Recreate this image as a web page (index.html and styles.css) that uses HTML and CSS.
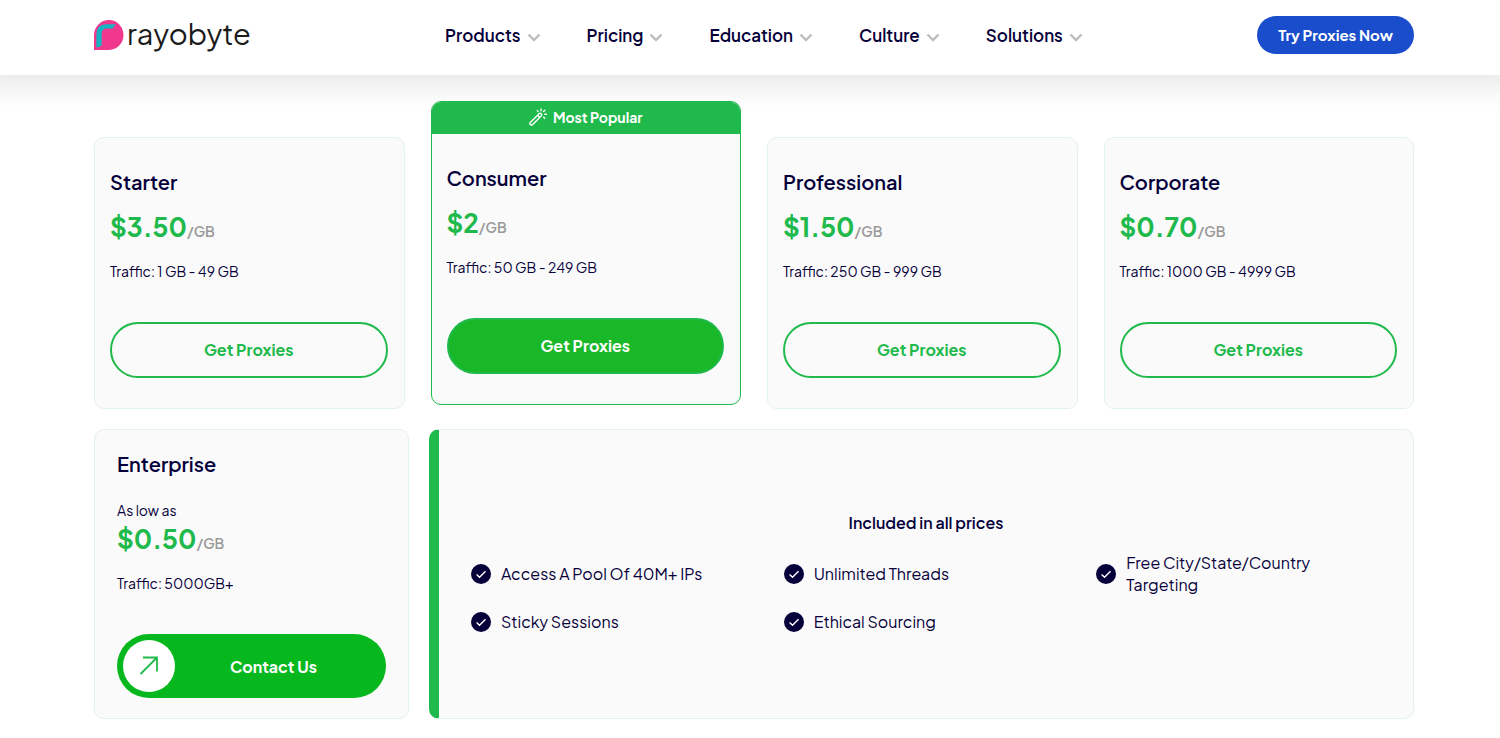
FILE: index.html
```html
<!DOCTYPE html>
<html lang="en">
<head>
<meta charset="utf-8">
<meta name="viewport" content="width=device-width, initial-scale=1">
<title>Rayobyte pricing</title>
<link rel="stylesheet" href="styles.css">
</head>
<body>
<svg class="sprite" aria-hidden="true">
  <symbol id="chevron" viewBox="0 0 14 10"><path d="M1.500 1.500L7 7l5.500-5.500" fill="none" stroke="#bdbdbd" stroke-width="2.400"/></symbol>
  <symbol id="check" viewBox="0 0 20 20"><circle cx="10" cy="10" r="10" fill="#06003a"/><path d="M5.6 10.6l2.9 2.7 6-6" fill="none" stroke="#fff" stroke-width="1.4"/></symbol>
</svg>
<header class="header">
  <a class="logo" href="#">
    <svg class="logo-mark" viewBox="0 0 30 30" aria-hidden="true">
      <path d="M0 30V15A15 15 0 0 1 15 0a14.5 15 0 0 1 0 30z" fill="#f0388f"/>
      <path d="M2.400 27.700V15Q2.400 4.300 12 4.300h10l-3.600 4.200H12.500Q7.700 8.500 7.700 14v10.500Q7.700 26.500 5.500 26.800z" fill="#17b3c3"/>
    </svg>
    <span class="logo-text">rayobyte</span>
  </a>
  <nav class="nav">
    <button class="nav-item" type="button">Products<svg class="chevron"><use href="#chevron"/></svg></button>
    <button class="nav-item" type="button">Pricing<svg class="chevron"><use href="#chevron"/></svg></button>
    <button class="nav-item" type="button">Education<svg class="chevron"><use href="#chevron"/></svg></button>
    <button class="nav-item" type="button">Culture<svg class="chevron"><use href="#chevron"/></svg></button>
    <button class="nav-item" type="button">Solutions<svg class="chevron"><use href="#chevron"/></svg></button>
  </nav>
  <a class="cta" href="#">Try Proxies Now</a>
</header>
<main class="pricing">
  <section class="plans">
    <article class="card plan">
      <h2 class="plan-name">Starter</h2>
      <p class="price">$3.50<span class="unit">/GB</span></p>
      <p class="traffic">Traffic: 1 GB - 49 GB</p>
      <a class="button" href="#">Get Proxies</a>
    </article>
    <article class="popular">
      <div class="ribbon">
        <svg class="wand" viewBox="0 0 18 18" fill="none" stroke="#fff" stroke-width="1.400" stroke-linecap="round" stroke-linejoin="round" aria-hidden="true">
          <path d="M1.300 14.500L10 5.800q1.200-1 2.200 0t0 2.200l-8.700 8.700q-1.200.8-2.200-.1t0-2.100zM8.500 7.300l2.200 2.200M8.300 2.600l.9 1M12 1v1.700M15.800 2.200l-1.200 1.300M15.700 6.200h1.700M14.700 9.300l.9.900"/>
        </svg>
        Most Popular
      </div>
      <div class="plan">
        <h2 class="plan-name">Consumer</h2>
        <p class="price">$2<span class="unit">/GB</span></p>
        <p class="traffic">Traffic: 50 GB - 249 GB</p>
        <a class="button button-solid" href="#">Get Proxies</a>
      </div>
    </article>
    <article class="card plan">
      <h2 class="plan-name">Professional</h2>
      <p class="price">$1.50<span class="unit">/GB</span></p>
      <p class="traffic">Traffic: 250 GB - 999 GB</p>
      <a class="button" href="#">Get Proxies</a>
    </article>
    <article class="card plan">
      <h2 class="plan-name">Corporate</h2>
      <p class="price">$0.70<span class="unit">/GB</span></p>
      <p class="traffic">Traffic: 1000 GB - 4999 GB</p>
      <a class="button" href="#">Get Proxies</a>
    </article>
  </section>
  <section class="extras">
    <article class="card enterprise">
      <h2 class="plan-name">Enterprise</h2>
      <p class="low">As low as</p>
      <p class="price">$0.50<span class="unit">/GB</span></p>
      <p class="traffic">Traffic: 5000GB+</p>
      <a class="contact" href="#">
        <span class="contact-icon"><svg class="arrow" viewBox="0 0 20 20" aria-hidden="true"><path d="M1.500 18L18 1.500M4 1.500h14v14" fill="none" stroke="#20b94b" stroke-width="1.800"/></svg></span>
        <span class="contact-label">Contact Us</span>
      </a>
    </article>
    <article class="card included">
      <h3 class="included-title">Included in all prices</h3>
      <ul class="features">
        <li class="feature"><svg class="check"><use href="#check"/></svg>Access A Pool Of 40M+ IPs</li>
        <li class="feature"><svg class="check"><use href="#check"/></svg>Unlimited Threads</li>
        <li class="feature"><svg class="check"><use href="#check"/></svg>Free City/State/Country Targeting</li>
        <li class="feature"><svg class="check"><use href="#check"/></svg>Sticky Sessions</li>
        <li class="feature"><svg class="check"><use href="#check"/></svg>Ethical Sourcing</li>
      </ul>
    </article>
  </section>
</main>
</body>
</html>
```
FILE: styles.css
```css
* { box-sizing: border-box; }
body {
  margin: 0;
  background: #fff;
  color: #06003a;
  font-family: "Plus Jakarta Sans", Inter, sans-serif;
  font-size: 16px;
}
a { color: inherit; text-decoration: none; }
h2, h3, p, ul { margin: 0; padding: 0; }
.sprite { display: none; }

.header {
  display: flex;
  align-items: center;
  justify-content: space-between;
  height: 75px;
  padding: 0 86px 5px 94px;
  background: #fff;
  box-shadow: 0 -10px 30px 20px rgba(0, 0, 0, 0.1);
}
.logo { display: flex; align-items: flex-start; gap: 3px; }
.logo-mark { width: 30px; height: 30px; }
.logo-text { color: #1b1b1b; font-size: 29px; line-height: 26px; }
.nav { display: flex; gap: 46px; margin-left: 20px; }
.nav-item {
  display: flex;
  align-items: center;
  gap: 6px;
  padding: 0;
  border: 0;
  background: none;
  color: inherit;
  font: 600 17px/24px "Plus Jakarta Sans", Inter, sans-serif;
}
.chevron { width: 14px; height: 10px; margin-top: 5px; }
.cta {
  padding: 0 21px;
  border-radius: 19px;
  background: #1a4dcb;
  color: #fff;
  font-size: 15px;
  font-weight: 700;
  line-height: 38px;
}

.pricing { padding: 26px 86px 19px 94px; }
.plans {
  display: grid;
  grid-template-columns: repeat(4, 1fr);
  gap: 26px;
  align-items: end;
}
.card { border: 1px solid #e3f2ef; border-radius: 10px; background: #fafafa; }
.plan { padding: 30px 16px 30px 15px; }
.popular {
  margin-bottom: 4px;
  overflow: hidden;
  border: 1px solid #20b94b;
  border-radius: 10px;
  background: #fafafa;
}
.ribbon {
  display: flex;
  align-items: center;
  justify-content: center;
  gap: 6px;
  height: 32px;
  padding-bottom: 3px;
  background: #20b94b;
  color: #fff;
  font-size: 14px;
  font-weight: 700;
}
.wand { width: 18px; height: 18px; }
.plan-name { font-size: 20px; font-weight: 600; line-height: 28px; }
.price {
  margin-top: 12px;
  color: #20b94b;
  font-size: 26px;
  font-weight: 700;
  line-height: 38px;
}
.unit { color: #999; font-size: 14px; font-weight: 600; }
.traffic { margin-top: 11px; font-size: 14px; line-height: 20px; font-weight: 400; }
.button {
  display: block;
  margin-top: 41px;
  border: 2px solid #20b94b;
  border-radius: 28px;
  color: #20b94b;
  font-weight: 700;
  line-height: 52px;
  text-align: center;
}
.button-solid { background: #19b828; color: #fff; }

.extras {
  display: grid;
  grid-template-columns: 315fr 985fr;
  gap: 20px;
  margin-top: 20px;
}
.enterprise { padding: 20px 22px; }
.low { margin-top: 22px; font-size: 14px; line-height: 20px; font-weight: 400; }
.enterprise .price { margin-top: 0; }
.contact {
  display: flex;
  align-items: center;
  margin-top: 41px;
  padding: 6px;
  border-radius: 32px;
  background: #06b81e;
  color: #fff;
  font-weight: 700;
}
.contact-icon {
  display: grid;
  place-items: center;
  width: 52px;
  height: 52px;
  border-radius: 50%;
  background: #fff;
}
.arrow { width: 20px; height: 20px; }
.contact-label { flex: 1; padding-right: 8px; text-align: center; }
.included {
  display: flex;
  flex-direction: column;
  justify-content: center;
  gap: 18px;
  border-left: 10px solid #20b94b;
}
.included-title { font-size: 16px; font-weight: 600; line-height: 22px; text-align: center; }
.features {
  display: grid;
  grid-template-columns: repeat(3, 1fr);
  row-gap: 12px;
  padding: 0 4px 0 32px;
  list-style: none;
}
.feature {
  display: flex;
  align-items: center;
  gap: 10px;
  padding-right: 60px;
  min-height: 28px;
  font-weight: 400;
  line-height: 22px;
}
.check { flex: none; width: 20px; height: 20px; }
```
